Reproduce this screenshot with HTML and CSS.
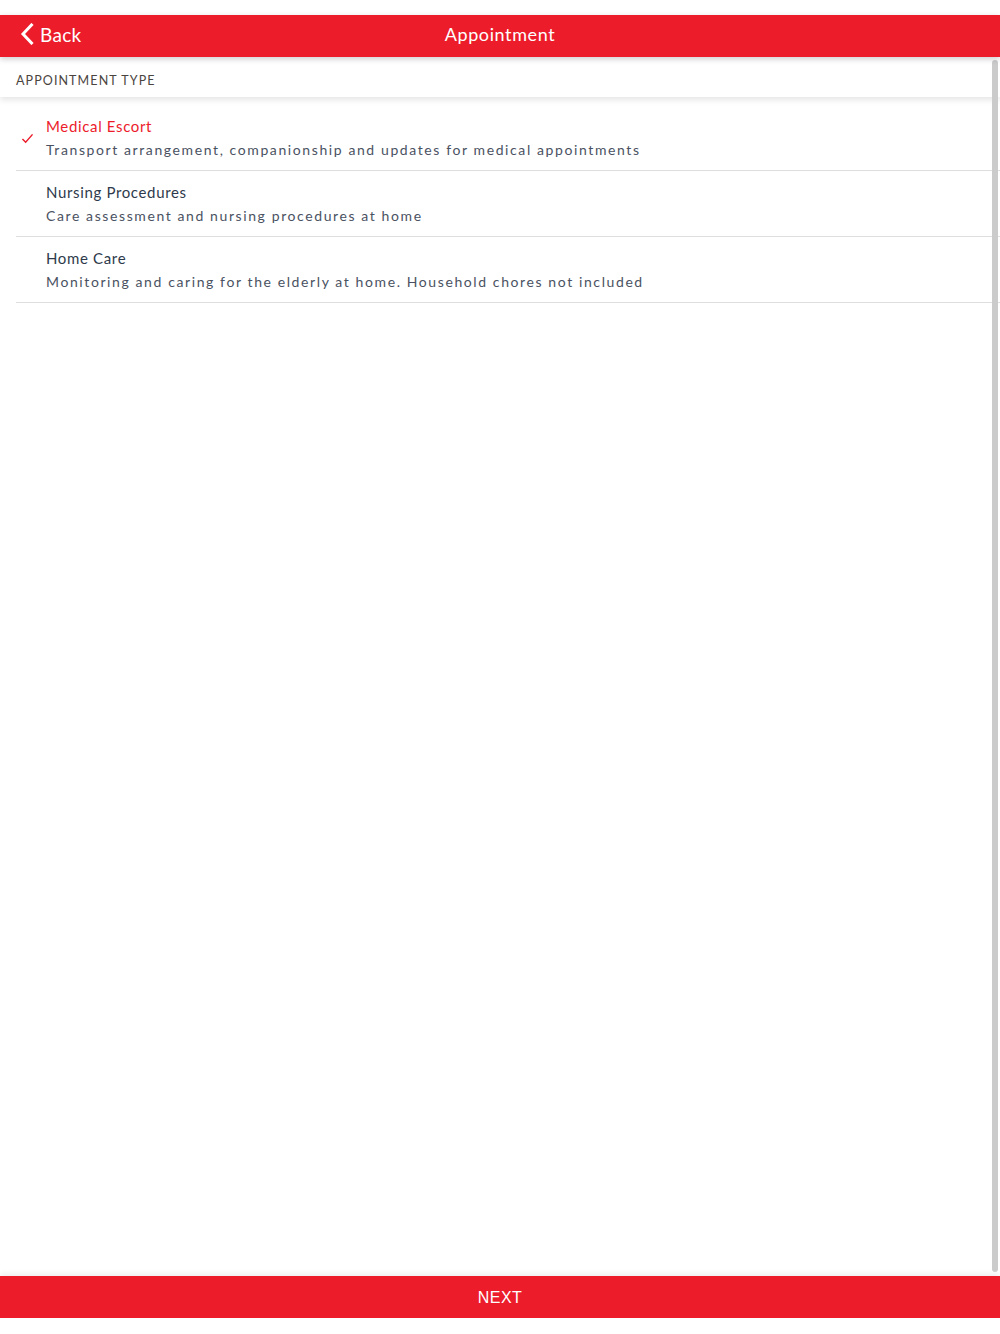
FILE: index.html
```html
<!DOCTYPE html>
<html lang="en">
  <head>
    <meta charset="UTF-8" />
    <title>Appointment</title>
    <link rel="stylesheet" href="styles.css">
  </head>
  <body>
    <div class="app">
      <div class="status-bar"></div>
      <header class="top-bar">
        <a class="back" href="#">
          <svg class="back-icon" viewBox="0 0 14 22" width="14" height="22">
            <path d="M11.5 2 L3 11 L11.5 20" fill="none" stroke="#fff" stroke-width="3" stroke-linecap="square" />
          </svg>
          <span>Back</span>
        </a>
        <h1 class="title">Appointment</h1>
      </header>

      <main class="content">
        <div class="section-head">APPOINTMENT TYPE</div>
        <ul class="options">
          <li class="option selected">
            <span class="check">
              <svg viewBox="0 0 14 12" width="13" height="11">
                <path d="M1.5 6.5 L5 10 L12.5 1.5" fill="none" stroke="#ec1c2b" stroke-width="1.6" />
              </svg>
            </span>
            <div class="option-text">
              <div class="option-name">Medical Escort</div>
              <div class="option-desc">Transport arrangement, companionship and updates for medical appointments</div>
            </div>
          </li>
          <li class="option">
            <span class="check"></span>
            <div class="option-text">
              <div class="option-name">Nursing Procedures</div>
              <div class="option-desc">Care assessment and nursing procedures at home</div>
            </div>
          </li>
          <li class="option">
            <span class="check"></span>
            <div class="option-text">
              <div class="option-name">Home Care</div>
              <div class="option-desc">Monitoring and caring for the elderly at home. Household chores not included</div>
            </div>
          </li>
        </ul>
        <div class="scrollbar"></div>
      </main>

      <button class="next-btn" type="button">NEXT</button>
      <div class="bottom-strip"></div>
    </div>
  </body>
</html>
```

FILE: styles.css
```css
* {
  box-sizing: border-box;
}
body {
  margin: 0;
  font-family: "Lato", "Open Sans", sans-serif;
  background: #fff;
  color: #2e3a4b;
}
.app {
  display: flex;
  flex-direction: column;
  height: 1334px;
}
.status-bar {
  height: 15px;
  background: #fff;
}
.top-bar {
  position: relative;
  height: 42px;
  padding-bottom: 4px;
  background: #ec1c2b;
  display: flex;
  align-items: center;
  justify-content: center;
  box-shadow: 0 2px 6px rgba(0, 0, 0, 0.2);
  z-index: 2;
}
.back {
  position: absolute;
  left: 20px;
  top: 0;
  height: 38px;
  display: flex;
  align-items: center;
  gap: 6px;
  color: #fff;
  text-decoration: none;
  font-size: 19px;
  letter-spacing: 0.3px;
}
.title {
  margin: 0;
  font-size: 18px;
  font-weight: normal;
  color: #fff;
  letter-spacing: 0.6px;
}
.content {
  position: relative;
  flex: 1;
  overflow: hidden;
}
.section-head {
  height: 40px;
  display: flex;
  align-items: center;
  padding: 6px 0 0 16px;
  font-size: 12.5px;
  letter-spacing: 1.1px;
  color: #4a4440;
  background: #fff;
  box-shadow: 0 3px 6px rgba(0, 0, 0, 0.1);
}
.options {
  list-style: none;
  margin: 8px 0 0 16px;
  padding: 0;
}
.option {
  display: flex;
  align-items: center;
  height: 66px;
  border-bottom: 1px solid #dedede;
}
.check {
  width: 30px;
  display: flex;
  align-items: center;
  padding-left: 5px;
  padding-top: 2px;
}
.option-text {
  display: flex;
  flex-direction: column;
  gap: 6px;
  margin-top: -1px;
}
.option-name {
  font-size: 15px;
  letter-spacing: 0.65px;
  color: #2e3a4b;
}
.selected .option-name {
  color: #ec1c2b;
}
.option-desc {
  font-size: 14px;
  letter-spacing: 1.6px;
  color: #4a5262;
}
.scrollbar {
  position: absolute;
  right: 2px;
  top: 3px;
  bottom: 4px;
  width: 6px;
  border-radius: 3px;
  background: #cbcbcb;
}
.next-btn {
  display: block;
  width: 100%;
  height: 42px;
  padding-top: 2px;
  border: none;
  background: #ec1c2b;
  color: #fff;
  font-family: "Liberation Sans", Arial, sans-serif;
  font-size: 16px;
  letter-spacing: 0.5px;
  box-shadow: 0 -2px 6px rgba(0, 0, 0, 0.08);
  cursor: pointer;
}
.bottom-strip {
  height: 16px;
  background: #fff;
}
```
